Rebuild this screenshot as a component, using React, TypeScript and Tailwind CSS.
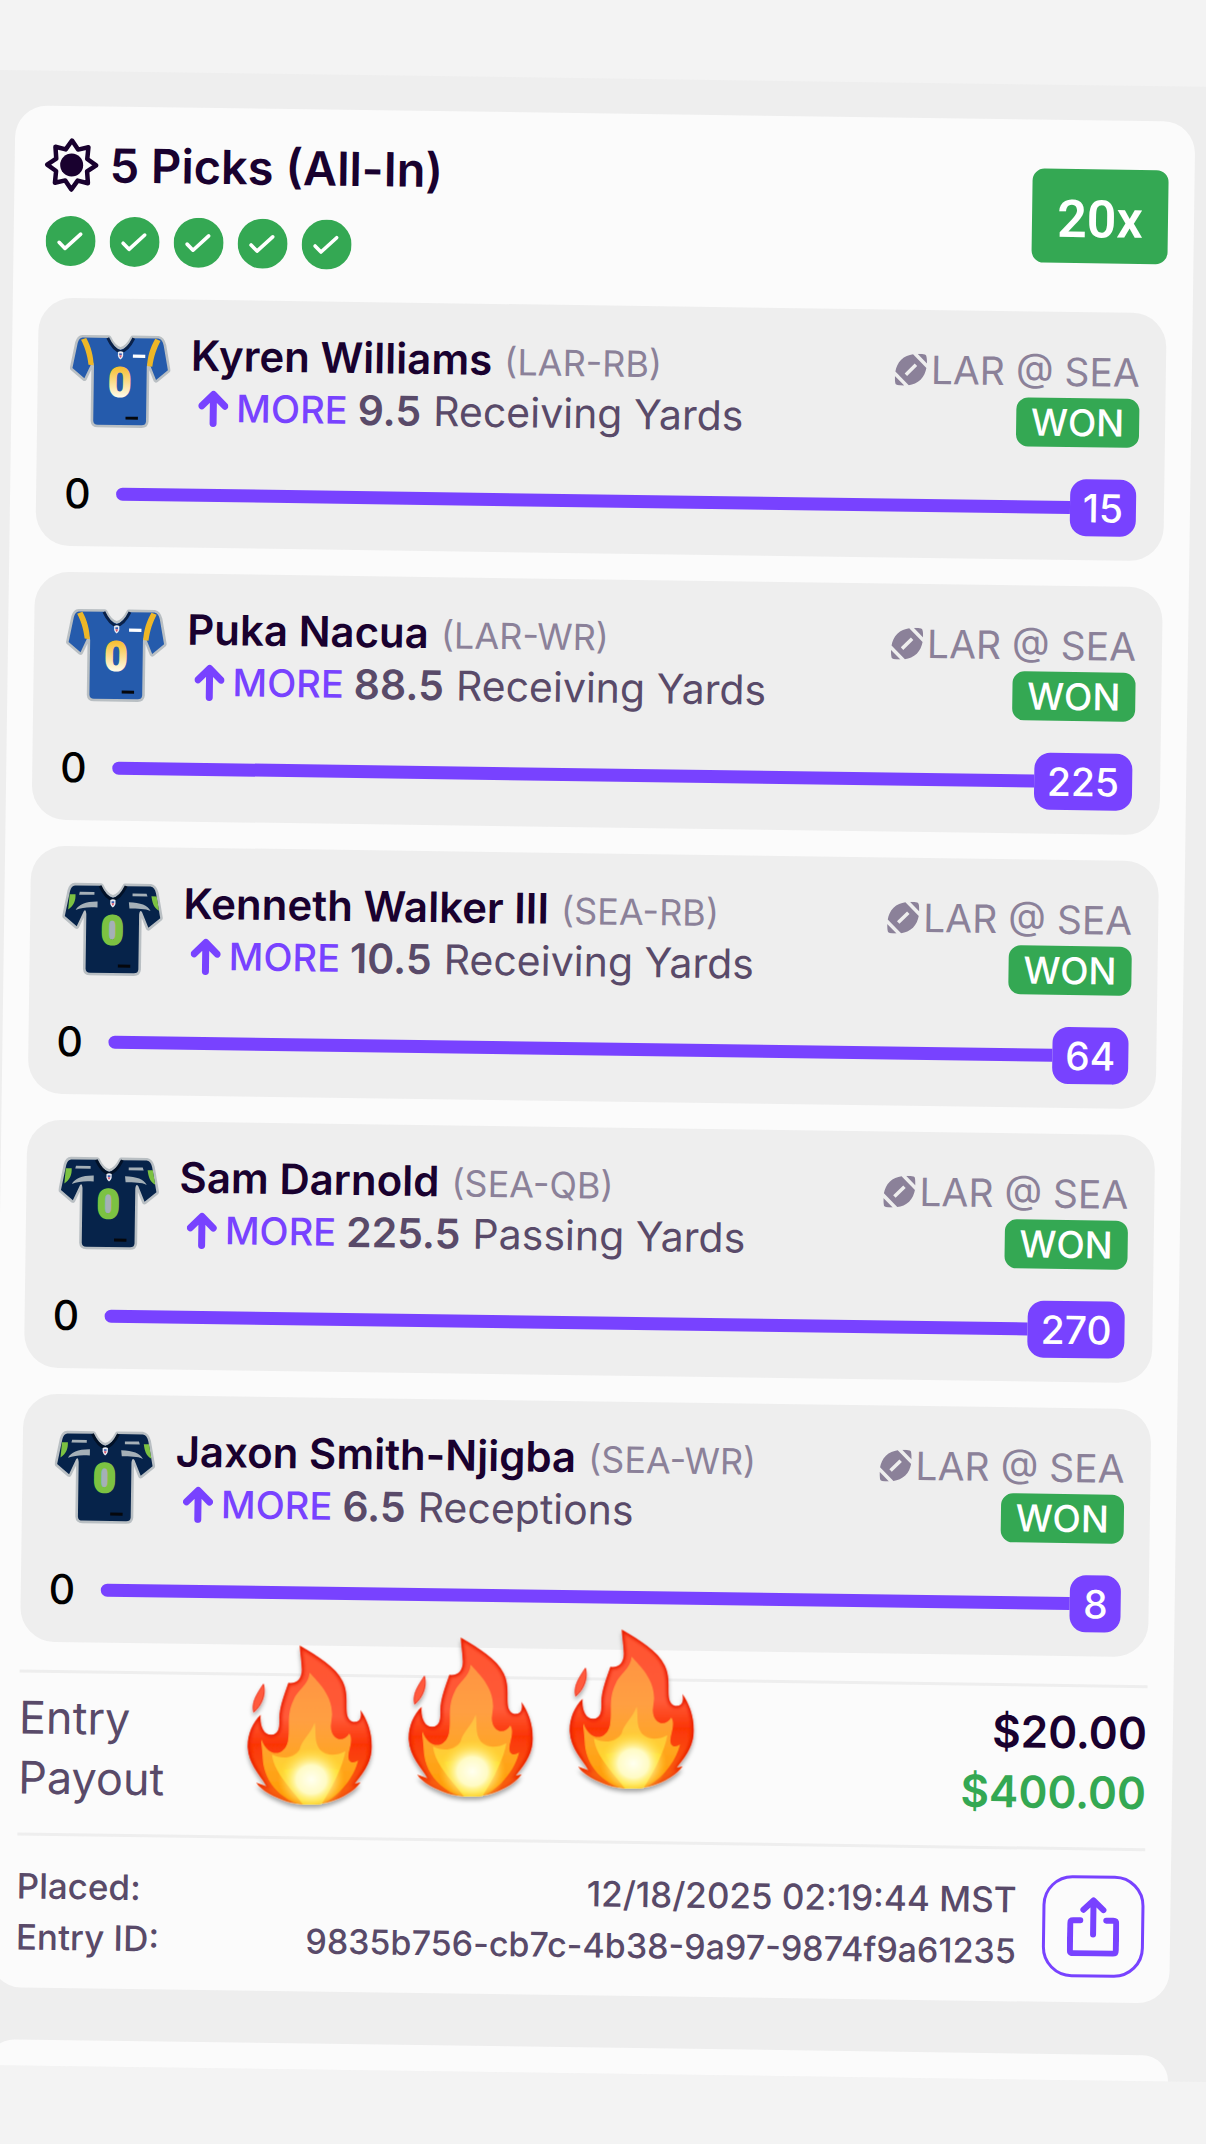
import React from 'react';

type Team = 'LAR' | 'SEA';

interface Pick {
  player: string;
  team: Team;
  position: string;
  line: string;
  stat: string;
  result: number;
}

const picks: Pick[] = [
  { player: 'Kyren Williams', team: 'LAR', position: 'RB', line: '9.5', stat: 'Receiving Yards', result: 15 },
  { player: 'Puka Nacua', team: 'LAR', position: 'WR', line: '88.5', stat: 'Receiving Yards', result: 225 },
  { player: 'Kenneth Walker III', team: 'SEA', position: 'RB', line: '10.5', stat: 'Receiving Yards', result: 64 },
  { player: 'Sam Darnold', team: 'SEA', position: 'QB', line: '225.5', stat: 'Passing Yards', result: 270 },
  { player: 'Jaxon Smith-Njigba', team: 'SEA', position: 'WR', line: '6.5', stat: 'Receptions', result: 8 },
];

function SunIcon() {
  return (
    <svg viewBox="0 0 56 56" className="size-14 shrink-0 text-[#19012f]" aria-hidden="true">
      <path
        d="M28 3.500 34.200 12.500 44.500 10 43.500 21.800 52.500 28 43.500 34.200 44.500 46 34.200 43.500 28 52.500 21.800 43.500 11.500 46 12.500 34.200 3.500 28 12.500 21.800 11.500 10 21.800 12.500Z"
        fill="none"
        stroke="currentColor"
        strokeWidth="4.500"
        strokeLinejoin="round"
      />
      <circle cx="28" cy="28" r="11.5" fill="currentColor" />
    </svg>
  );
}

function CheckIcon() {
  return (
    <svg viewBox="0 0 50 50" className="size-[50px]" role="img" aria-label="Won">
      <circle cx="25" cy="25" r="25" fill="#34a853" />
      <path d="M13.500 26.500 19.500 32.500 35 18" fill="none" stroke="#fff" strokeWidth="3.600" strokeLinecap="round" strokeLinejoin="round" />
    </svg>
  );
}

function ArrowUpIcon() {
  return (
    <svg viewBox="0 0 30 37" className="h-[37px] w-[30px] shrink-0" aria-hidden="true">
      <path d="M15 33.500V5M3.500 16 15 4.500 26.500 16" fill="none" stroke="#7842ff" strokeWidth="7" strokeLinecap="round" strokeLinejoin="round" />
    </svg>
  );
}

function FootballIcon() {
  return (
    <svg viewBox="3 3 18 18" className="size-8 shrink-0" fill="currentColor" aria-hidden="true">
      <path d="M3.020 15.620c-.08 2.420.32 4.340.67 4.690s2.280.76 4.690.67l-5.360-5.360zM13.080 3.280c-2.330.42-4.790 1.340-6.620 3.180s-2.760 4.290-3.180 6.620l7.630 7.630c2.340-.41 4.790-1.340 6.620-3.180s2.760-4.290 3.180-6.620L13.080 3.280zM9.900 15.500l-1.400-1.400 5.600-5.600 1.400 1.400-5.600 5.600zM20.980 8.380c.08-2.420-.32-4.340-.67-4.690s-2.280-.76-4.690-.67l5.360 5.360z" />
    </svg>
  );
}

function ShareIcon() {
  return (
    <svg viewBox="0 0 52 60" className="h-[60px] w-[52px]" fill="none" stroke="#7842ff" strokeWidth="6" strokeLinecap="round" strokeLinejoin="round" aria-hidden="true">
      <path d="M13 24H6q-3 0-3 3v27q0 3 3 3h40q3 0 3-3V27q0-3-3-3h-7" />
      <path d="M26 38V5M16 13.500 26 4l10 9.500" />
    </svg>
  );
}

const jerseyShape =
  'M64 37H144C153 56 166 70 181 73C196 70 209 56 218 37H296C306 39 310 46 313 58L327 134 291 164 271 116Q264 106 262 124V292Q261 304 248 304H114Q101 304 100 292V124Q98 106 92 116L71 162 34 131 49 54Q53 38 64 37Z';

function Jersey({ team }: { team: Team }) {
  const rams = team === 'LAR';
  const numberFill = rams ? 'url(#gold-number)' : '#7cc242';
  return (
    <svg viewBox="26 24 310 294" className="mt-[5px] h-24 w-[101px] shrink-0" role="img" aria-label={`${team} jersey`}>
      <defs>
        <linearGradient id="gold-number" x1="0" y1="0" x2="0" y2="1">
          <stop offset="0.150" stopColor="#f6bd2c" />
          <stop offset="0.800" stopColor="#fffbe9" />
        </linearGradient>
      </defs>
      <path d={jerseyShape} fill="none" stroke="#b9bfc3" strokeWidth="16" strokeLinejoin="round" />
      <path d={jerseyShape} fill={rams ? '#255bac' : '#06234a'} />
      <path d="M141 37C152 60 166 76 181 79C196 76 210 60 221 37" fill="none" stroke={rams ? '#0a2149' : '#021127'} strokeWidth="9" />
      {rams ? (
        <>
          <path d="M59 44 75 38C90 64 98 94 99 122L83 120C79 88 70 64 59 44Z" fill="#eeb727" />
          <path d="M303 44 287 38C272 64 264 94 263 122L279 124C283 90 292 66 303 44Z" fill="#eeb727" />
          <rect x="219" y="87" width="38" height="10" fill="#fff" />
        </>
      ) : (
        <g transform="translate(-6 5)">
          <path d="M85 51H130V60H83ZM247 54H290L293 63H247ZM73 107C82 90 104 80 140 80V99C112 97 92 100 73 107ZM236 81C272 81 294 90 303 107C286 99 264 101 238 100Z" fill="#a5b0b7" />
          <path d="M54 59H72C73 80 67 94 50 106ZM305 62H321L329 106C312 96 308 82 305 62Z" fill="#7cc242" />
          <ellipse cx="187" cy="166" rx="18" ry="32" fill="#a5b0b7" />
        </g>
      )}
      <text
        x="180"
        y="216"
        textAnchor="middle"
        fontFamily="Roboto, sans-serif"
        fontWeight="700"
        fontSize="124"
        fill={numberFill}
        stroke={numberFill}
        strokeWidth="5"
      >
        0
      </text>
      <path d="M173 80q8-5 16 0v12q-2 7-8 11q-6-4-8-11Z" fill="#e9edf4" />
      <path d="M177 84h8v5h-8z" fill="#3f5fb0" />
      <path d="M177 90h8q-1 5-4 8q-3-3-4-8Z" fill="#d9536a" />
      <rect x="199" y="278" width="38" height="9" fill="#05070c" />
    </svg>
  );
}

const flameShape =
  'M208 138C262 170 316 202 337 245C353 278 347 305 349 335C350 358 362 369 375 367C391 365 394 350 390 331C412 362 427 405 424 450C420 498 394 524 373 553L391 548C372 576 335 595 300 607C265 618 205 618 170 607C132 592 94 576 77 549L108 560C90 528 55 495 52 445C50 410 65 370 91 346C88 375 98 406 123 406C145 405 148 385 147 355C147 325 160 290 174 250C200 255 217 235 214 205C213 180 209 160 208 138Z';

function Flame({ x, y }: { x: number; y: number }) {
  return (
    <g transform={`translate(${x} ${y})`} filter="url(#flame-shadow)">
      <path d="M99 254C107 280 97 315 70 338C64 308 76 290 99 254Z" fill="#ff5a3c" stroke="#f0321c" strokeWidth="3" />
      <g clipPath="url(#flame-clip)">
        <path d={flameShape} fill="url(#flame-base)" />
        <path
          d="M238 220C262 248 305 285 305 345L301 380C302 422 340 432 357 402C372 430 346 462 356 482C362 492 374 490 383 482C372 530 330 590 270 616H215C150 600 100 545 97 475C96 450 92 430 93 420C112 475 162 472 173 425C180 380 168 350 188 305C203 268 235 258 238 220Z"
          fill="url(#flame-orange)"
        />
        <path
          d="M253 370C258 400 250 425 268 450C285 470 318 470 345 455C335 510 300 570 272 616H218C190 575 130 520 125 465C150 478 190 480 208 450C215 420 240 405 253 370Z"
          fill="url(#flame-yellow)"
        />
        <path d="M160 512C195 500 290 500 326 512C310 555 288 590 270 618H222C200 580 178 550 160 512Z" fill="#ffe325" fillOpacity="0.700" />
        <ellipse cx="243" cy="540" rx="100" ry="95" fill="url(#flame-core)" />
        <path d={flameShape} fill="none" stroke="#e81a00" strokeWidth="12" filter="url(#flame-soft)" mask="url(#flame-edge)" />
      </g>
    </g>
  );
}

function Flames() {
  return (
    <svg
      viewBox="30 60 1440 600"
      className="pointer-events-none absolute -top-[56px] left-[220px] h-[200px] w-[480px] origin-top-left -rotate-[0.8deg]"
      role="img"
      aria-label="Fire"
    >
      <defs>
        <linearGradient id="flame-base" x1="0" y1="0" x2="0" y2="1">
          <stop offset="0" stopColor="#ff5430" />
          <stop offset="0.450" stopColor="#ff5a38" />
          <stop offset="0.620" stopColor="#fb3506" />
          <stop offset="1" stopColor="#f76a10" />
        </linearGradient>
        <linearGradient id="flame-orange" x1="0" y1="0" x2="0" y2="1">
          <stop offset="0" stopColor="#ff9443" />
          <stop offset="0.350" stopColor="#ff9f43" />
          <stop offset="0.700" stopColor="#ffa51e" />
          <stop offset="1" stopColor="#ff9a00" />
        </linearGradient>
        <linearGradient id="flame-yellow" x1="0" y1="0" x2="0" y2="1">
          <stop offset="0" stopColor="#ffbe45" />
          <stop offset="0.500" stopColor="#ffcf33" />
          <stop offset="1" stopColor="#ffe11c" />
        </linearGradient>
        <radialGradient id="flame-core">
          <stop offset="0" stopColor="#fffff0" />
          <stop offset="0.450" stopColor="#fffbc4" />
          <stop offset="1" stopColor="#ffe23a" stopOpacity="0" />
        </radialGradient>
        <linearGradient id="flame-fade" x1="0" y1="0" x2="0" y2="1">
          <stop offset="0.750" stopColor="#fff" />
          <stop offset="0.960" stopColor="#000" />
        </linearGradient>
        <mask id="flame-edge" maskUnits="userSpaceOnUse" x="30" y="120" width="420" height="520">
          <rect x="30" y="120" width="420" height="520" fill="url(#flame-fade)" />
        </mask>
        <clipPath id="flame-clip">
          <path d={flameShape} />
        </clipPath>
        <filter id="flame-soft" x="-10%" y="-10%" width="120%" height="120%">
          <feGaussianBlur stdDeviation="4" />
        </filter>
        <filter id="flame-shadow" x="-10%" y="-10%" width="120%" height="125%">
          <feDropShadow dx="0" dy="10" stdDeviation="7" floodColor="#000" floodOpacity="0.350" />
        </filter>
      </defs>
      <Flame x={0} y={0} />
      <Flame x={483} y={-24} />
      <Flame x={966} y={-48} />
    </svg>
  );
}

function PickCard({ pick }: { pick: Pick }) {
  return (
    <li className="rounded-[34px] bg-[#eeeeee] pt-[30px] pb-6">
      <div className="flex justify-between pr-[26px] pl-8">
        <div className="flex gap-5">
          <Jersey team={pick.team} />
          <div className="whitespace-nowrap">
            <div className="flex h-[52px] items-baseline gap-3 leading-[52px]">
              <h2 className="text-[42px] font-semibold text-[#19012f]">{pick.player}</h2>
              <span className="text-[36px] text-[#8b8199]">
                ({pick.team}-{pick.position})
              </span>
            </div>
            <p className="flex h-[52px] items-center pl-2 text-[41px] leading-[52px] text-[#594a69]">
              <ArrowUpIcon />
              <span className="ml-2 text-[38px] font-medium text-[#7842ff]">MORE</span>
              <strong className="ml-[10px] font-semibold">{pick.line}</strong>
              <span className="ml-3">{pick.stat}</span>
            </p>
          </div>
        </div>
        <div className="flex flex-col items-end pt-1 whitespace-nowrap">
          <div className="flex items-center gap-1 text-[39px] leading-[52px] text-[#8b8199]">
            <FootballIcon />
            LAR @ SEA
          </div>
          <span className="rounded-xl bg-[#34a853] px-[15px] text-[37px] leading-[49px] font-medium text-white">WON</span>
        </div>
      </div>
      <div className="mt-8 flex items-center pr-7 pl-7">
        <span className="w-[52px] text-[41px] leading-[57px] font-medium text-black">0</span>
        <div
          role="meter"
          aria-label={`${pick.player} ${pick.stat}`}
          aria-valuemin={0}
          aria-valuemax={pick.result}
          aria-valuenow={pick.result}
          className="flex flex-1 items-center"
        >
          <div className="h-[13px] flex-1 rounded-l-full bg-[#7842ff]" />
          <span className="rounded-2xl bg-[#7842ff] px-[13px] text-[39px] leading-[57px] font-medium text-white">{pick.result}</span>
        </div>
      </div>
    </li>
  );
}

export default function App() {
  return (
    <div className="min-h-screen overflow-hidden bg-[#f3f3f3] pt-[70px] font-['Inter',sans-serif]">
      <main className="-mr-8 origin-top-left rotate-[0.8deg] bg-[#eeeeee] pt-[35px] pr-[42px] pl-4">
        <article className="rounded-[32px] bg-[#fbfbfb] px-[26px] pt-[31px] pb-[25px]">
          <header className="flex items-center justify-between">
            <div>
              <h1 className="flex items-center gap-[10px] pl-[3px] text-[47px] leading-[56px] font-semibold text-[#19012f]">
                <SunIcon />
                5 Picks (All-In)
              </h1>
              <div className="mt-[23px] flex gap-[14px] pl-[6px]">
                {picks.map((pick) => (
                  <CheckIcon key={pick.player} />
                ))}
              </div>
            </div>
            <span className="w-[136px] rounded-xl bg-[#34a853] pt-2 text-center font-['Roboto',sans-serif] text-[52px] leading-[86px] font-semibold text-white">
              20x
            </span>
          </header>

          <ul className="mt-8 flex flex-col gap-[26px]">
            {picks.map((pick) => (
              <PickCard key={pick.player} pick={pick} />
            ))}
          </ul>

          <section className="relative mt-7 border-t-[3px] border-[#eeeeee] pt-[15px] pb-[25px] text-[45px] leading-[60px]">
            <dl>
              <div className="flex justify-between">
                <dt className="text-[#594a69]">Entry</dt>
                <dd className="text-[44px] font-semibold text-[#19012f]">$20.00</dd>
              </div>
              <div className="flex justify-between">
                <dt className="text-[#594a69]">Payout</dt>
                <dd className="text-[44px] font-semibold text-[#34a853]">$400.00</dd>
              </div>
            </dl>
            <Flames />
          </section>

          <footer className="flex items-center gap-[26px] border-t-[3px] border-[#eeeeee] pt-[25px] text-[#594a69]">
            <dl className="flex-1 text-[35px] leading-[51px] font-medium">
              <div className="flex justify-between">
                <dt>Placed:</dt>
                <dd>12/18/2025 02:19:44 MST</dd>
              </div>
              <div className="flex justify-between">
                <dt>Entry ID:</dt>
                <dd className="text-[34px]">9835b756-cb7c-4b38-9a97-9874f9a61235</dd>
              </div>
            </dl>
            <button
              type="button"
              aria-label="Share entry"
              className="flex size-[102px] items-center justify-center rounded-[30px] border-[3px] border-[#7842ff]"
            >
              <ShareIcon />
            </button>
          </footer>
        </article>

        <div className="mt-[52px] h-[26px] rounded-t-[32px] bg-[#fbfbfb]" />
      </main>
    </div>
  );
}
